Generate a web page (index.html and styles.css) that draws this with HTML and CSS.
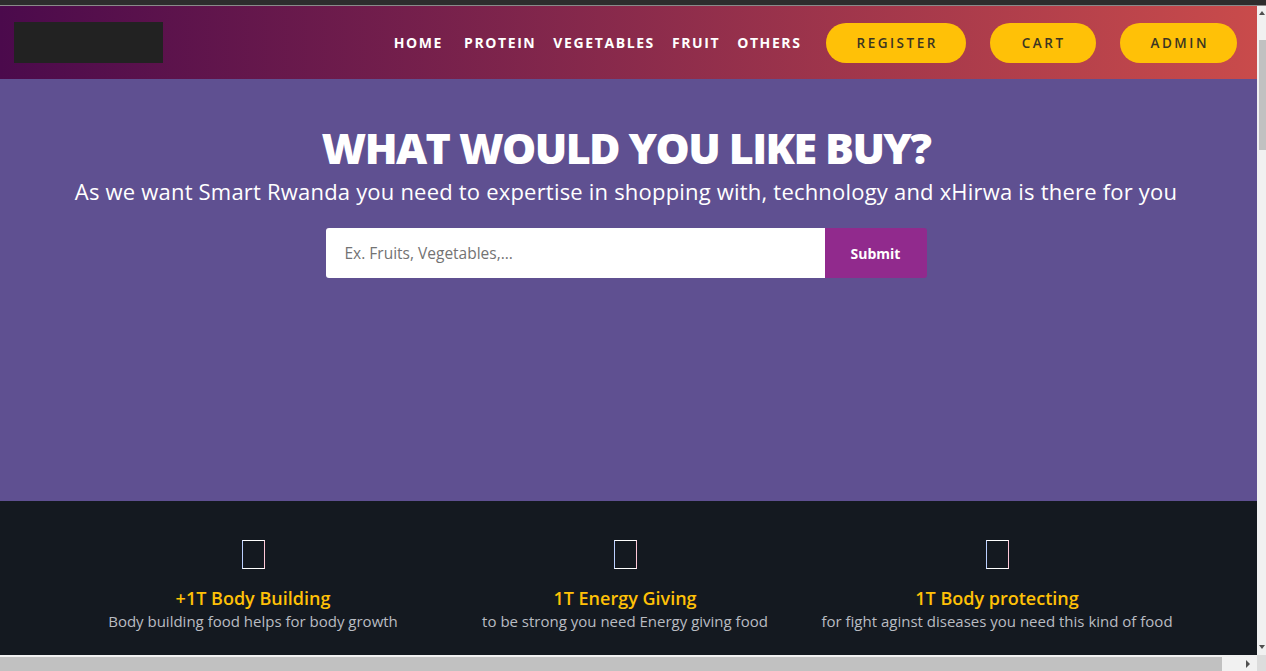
FILE: index.html
```html
<!DOCTYPE html>
<html lang="en">
<head>
<meta charset="utf-8">
<title>xHirwa Shop</title>
<link rel="stylesheet" href="styles.css">
</head>
<body>
<div class="chrome-top"></div>
<div class="viewport">
  <div class="page">
    <header class="topbar">
      <div class="logo"></div>
      <div class="topbar-right">
        <nav class="nav">
          <a class="nav-link" href="#">HOME</a>
          <a class="nav-link" href="#">PROTEIN</a>
          <a class="nav-link" href="#">VEGETABLES</a>
          <a class="nav-link" href="#">FRUIT</a>
          <a class="nav-link" href="#">OTHERS</a>
        </nav>
        <div class="actions">
          <a class="pill" href="#">REGISTER</a>
          <a class="pill" href="#">CART</a>
          <a class="pill" href="#">ADMIN</a>
        </div>
      </div>
    </header>
    <section class="hero">
      <h1 class="hero-title">WHAT WOULD YOU LIKE BUY?</h1>
      <p class="hero-sub">As we want Smart Rwanda you need to expertise in shopping with, technology and xHirwa is there for you</p>
      <form class="search">
        <input class="search-input" type="text" placeholder="Ex. Fruits, Vegetables,...">
        <button class="search-btn" type="button">Submit</button>
      </form>
    </section>
    <section class="features">
      <div class="feature-grid">
        <div class="feature">
          <span class="tofu"></span>
          <h3 class="feature-title">+1T Body Building</h3>
          <p class="feature-text">Body building food helps for body growth</p>
        </div>
        <div class="feature">
          <span class="tofu"></span>
          <h3 class="feature-title">1T Energy Giving</h3>
          <p class="feature-text">to be strong you need Energy giving food</p>
        </div>
        <div class="feature">
          <span class="tofu"></span>
          <h3 class="feature-title">1T Body protecting</h3>
          <p class="feature-text">for fight aginst diseases you need this kind of food</p>
        </div>
      </div>
    </section>
  </div>
  <div class="vscroll">
    <span class="arrow-up"></span>
    <div class="vthumb"></div>
    <div class="vfill"></div>
    <span class="arrow-down"></span>
  </div>
</div>
<div class="hscroll">
  <div class="hthumb"></div>
  <div class="htrack"><span class="arrow-right"></span></div>
  <div class="corner"></div>
</div>
</body>
</html>
```
FILE: styles.css
```css
* { box-sizing: border-box; }
html, body { margin: 0; padding: 0; }
body {
  width: 1266px;
  height: 671px;
  overflow: hidden;
  display: flex;
  flex-direction: column;
  font-family: "Open Sans", "Liberation Sans", sans-serif;
  background: #f1f1f1;
}
.chrome-top {
  height: 6px;
  background: #2d2d2d;
  border-bottom: 1px solid #8a8a8a;
  flex: none;
}
.viewport {
  display: flex;
  height: 649px;
  flex: none;
}
.page {
  width: 1257px;
  flex: none;
  display: flex;
  flex-direction: column;
  overflow: hidden;
}
.topbar {
  height: 73px;
  flex: none;
  display: flex;
  align-items: center;
  justify-content: space-between;
  padding: 0 20px 0 14px;
  background: linear-gradient(to right, #4b0a4c, #c94b4b);
}
.logo {
  width: 149px;
  height: 41px;
  background: #222222;
  margin-top: -1px;
}
.topbar-right {
  display: flex;
  align-items: center;
}
.nav {
  display: flex;
  align-items: center;
  gap: 17px;
  margin-right: 24px;
}
.nav-link {
  color: #ffffff;
  text-decoration: none;
  font-weight: 700;
  font-size: 14px;
  letter-spacing: 1.6px;
}
.nav-link:first-child { margin-right: 4px; }
.actions {
  display: flex;
  gap: 24px;
}
.pill {
  height: 40px;
  display: flex;
  align-items: center;
  justify-content: center;
  padding: 0 28px 0 31px;
  border-radius: 20px;
  background: #ffc107;
  color: #3b3522;
  text-decoration: none;
  font-weight: 600;
  font-size: 13.5px;
  letter-spacing: 2.5px;
}
.pill:nth-child(2) { padding: 0 30px 0 32px; }
.hero {
  height: 422px;
  flex: none;
  background: #5f5091;
  display: flex;
  flex-direction: column;
  align-items: center;
  padding: 41px 5px 0 0;
  color: #ffffff;
}
.hero-title {
  margin: 0;
  font-size: 43px;
  font-weight: 800;
  line-height: 56px;
  letter-spacing: -1.6px;
}
.hero-sub {
  margin: 0;
  font-size: 22px;
  line-height: 30px;
  letter-spacing: 0.2px;
}
.search {
  margin-top: 22px;
  display: flex;
  width: 601px;
  height: 50px;
}
.search-input {
  flex: 1;
  height: 50px;
  border: none;
  border-radius: 3px 0 0 3px;
  padding: 0 19px;
  font-family: inherit;
  font-size: 15.5px;
  color: #333;
  background: #ffffff;
  outline: none;
}
.search-input::placeholder { color: #737373; }
.search-btn {
  width: 102px;
  height: 50px;
  border: none;
  border-radius: 0 3px 3px 0;
  background: #912a8d;
  color: #ffffff;
  font-family: inherit;
  font-size: 14px;
  font-weight: 700;
}
.features {
  flex: 1;
  background: #141920;
  padding: 39px 7px 0 0;
  display: flex;
  justify-content: center;
}
.feature-grid {
  display: grid;
  grid-template-columns: repeat(3, 372px);
}
.feature {
  display: flex;
  flex-direction: column;
  align-items: center;
  text-align: center;
}
.tofu {
  width: 23px;
  height: 29px;
  border: 1px solid #ffffff;
  border-left-color: #bcd0ff;
  border-right-color: #ffc8d8;
}
.feature-title {
  margin: 16px 0 0;
  font-size: 18px;
  font-weight: 600;
  line-height: 26px;
  color: #ffc107;
}
.feature-text {
  margin: 0;
  font-size: 15px;
  line-height: 20px;
  color: #b9bcc2;
}
.vscroll {
  width: 9px;
  flex: none;
  background: #f1f1f1;
  display: flex;
  flex-direction: column;
  align-items: flex-end;
}
.arrow-up {
  margin: 5px 1px 0 0;
  width: 0;
  height: 0;
  border-left: 3px solid transparent;
  border-right: 3px solid transparent;
  border-bottom: 4px solid #505050;
}
.vthumb {
  margin-top: 25px;
  width: 7px;
  height: 110px;
  background: #c1c1c1;
}
.vfill { flex: 1; }
.arrow-down {
  margin: 0 1px 6px 0;
  width: 0;
  height: 0;
  border-left: 3px solid transparent;
  border-right: 3px solid transparent;
  border-top: 4px solid #505050;
}
.hscroll {
  height: 16px;
  flex: none;
  display: flex;
  background: #f1f1f1;
}
.hthumb {
  width: 1222px;
  height: 14px;
  margin-top: 2px;
  background: #c1c1c1;
}
.htrack {
  width: 35px;
  display: flex;
  justify-content: flex-end;
  align-items: center;
  padding-right: 7px;
}
.arrow-right {
  width: 0;
  height: 0;
  border-top: 4px solid transparent;
  border-bottom: 4px solid transparent;
  border-left: 4px solid #505050;
  margin-top: 2px;
}
.corner {
  width: 9px;
  background: #dcdcdc;
}
```
